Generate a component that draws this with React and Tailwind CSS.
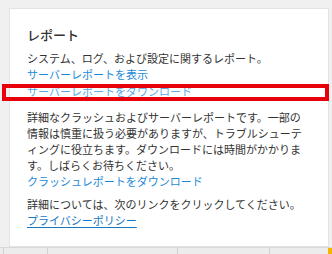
export default function App() {
  const font = { fontFamily: '"Noto Sans CJK JP", "Noto Sans", sans-serif' };
  return (
    <div className="relative w-[332px] h-[254px] bg-[#f0f0f0] overflow-hidden flex flex-col" style={font}>
      {/* Panel */}
      <div className="pl-[9px] pr-[3px] pt-[8px] flex-1 flex">
        <div className="flex-1 bg-white border border-[#e3e3e3] pl-[17px] pr-[20px] pt-[16px]">
          <h2 className="text-[13px] leading-[20px] font-medium text-[#333]">レポート</h2>
          <div className="mt-[5px] text-[11px] leading-[16px] text-[#333]">
            <p>システム、ログ、および設定に関するレポート。</p>
            <a className="block text-[#1e8ad6]">サーバーレポートを表示</a>
            <a className="block mt-[1px] text-[#5aaae6]">サーバーレポートをダウンロード</a>
            <p className="mt-[10px] whitespace-nowrap">
              詳細なクラッシュおよびサーバーレポートです。一部の<br />
              情報は慎重に扱う必要がありますが、トラブルシューテ<br />
              ィングに役立ちます。ダウンロードには時間がかかりま<br />
              す。しばらくお待ちください。
            </p>
            <a className="block text-[#1e8ad6]">クラッシュレポートをダウンロード</a>
            <p className="mt-[7px]">詳細については、次のリンクをクリックしてください。</p>
            <a className="block text-[#1877c4] underline underline-offset-2">プライバシーポリシー</a>
          </div>
        </div>
      </div>

      {/* Bottom strip */}
      <div className="h-[7px] flex bg-[#ececec] border-t border-[#d8d8d8]">
        <div className="w-[4px] border-r border-[#d0d0d0]" />
        <div className="w-[44px] border-r border-[#d0d0d0]" />
        <div className="w-[130px] border-r border-[#d0d0d0]" />
        <div className="w-[92px] border-r border-[#d0d0d0]" />
        <div className="flex-1" />
        <div className="w-[4px] bg-[#f5b400]" />
      </div>

      {/* Highlight box */}
      <div className="absolute left-[2px] top-[84px] w-[327px] h-[17px] border-[4px] border-[#e8000b]" />
    </div>
  );
}
